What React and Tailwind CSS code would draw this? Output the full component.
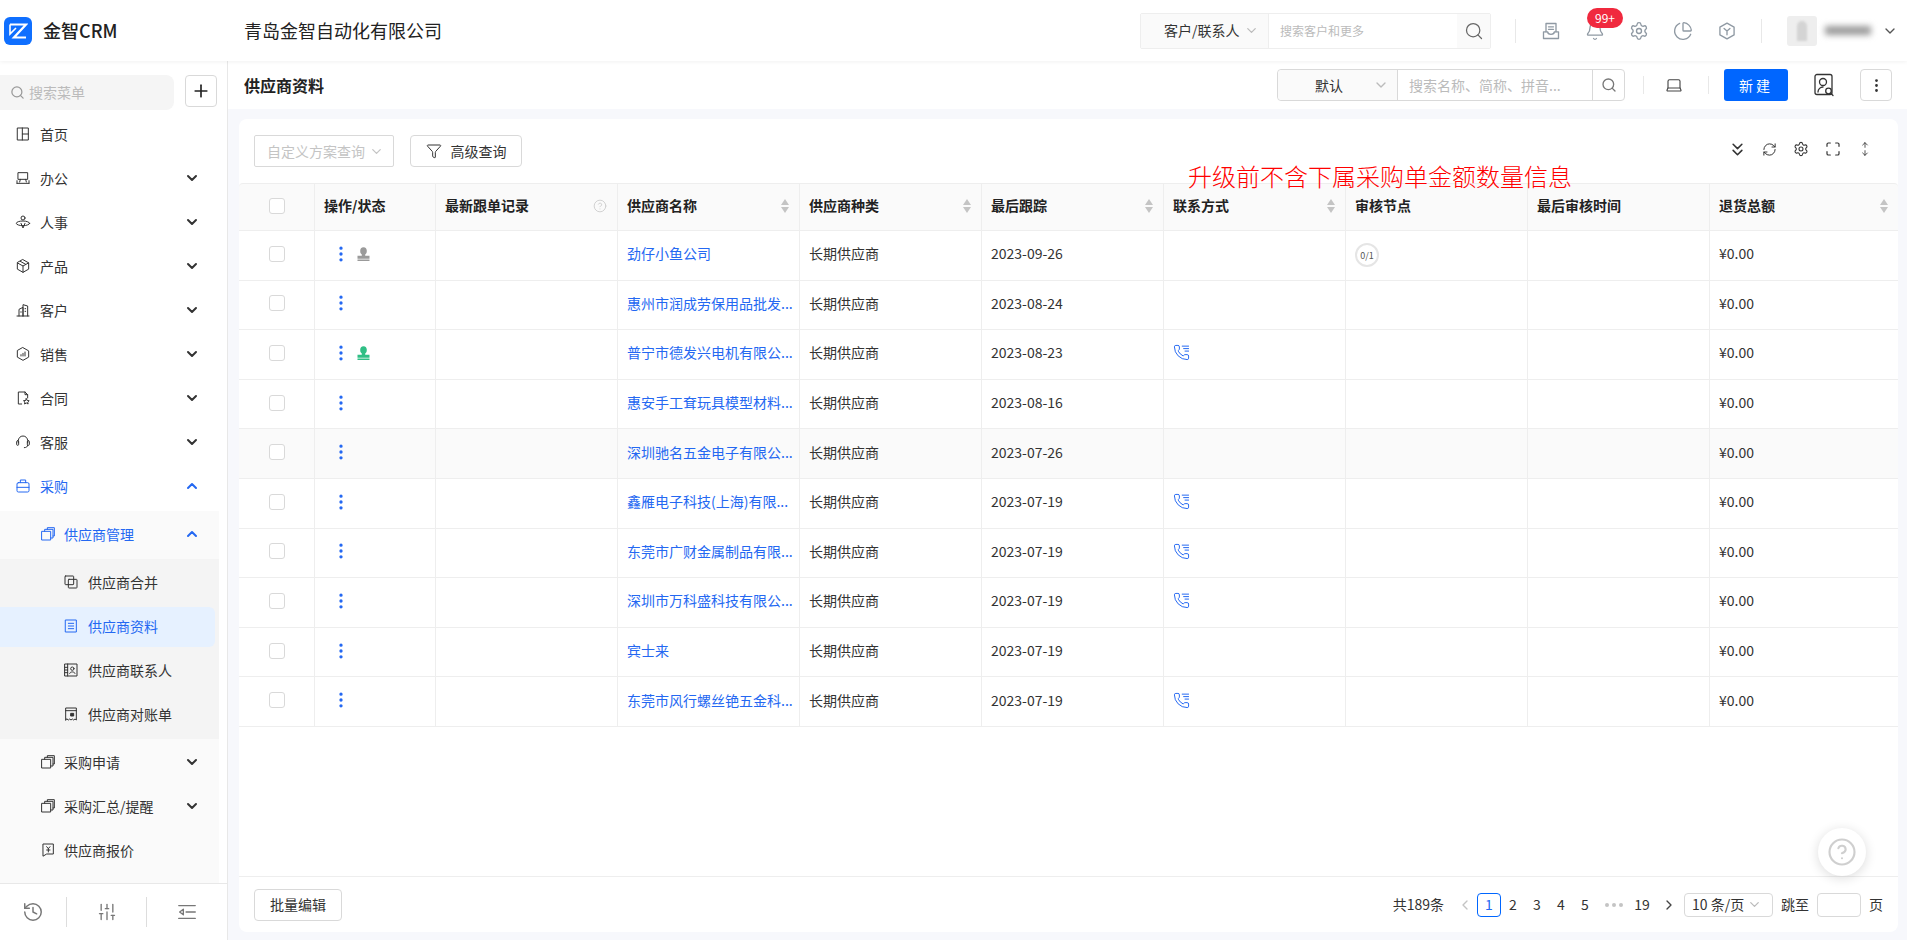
import React from 'react';
import { Search, Plus, ChevronDown, ChevronUp, Settings, Bell, History, Laptop, EllipsisVertical, CircleHelp, Filter, ChevronsDown, RefreshCw, Maximize, PieChart, ChevronLeft, ChevronRight, SlidersVertical, ArrowUp, ArrowDown } from 'lucide-react';

const I = ({ children, s = 16, className = '', w = 1.5 }) => (
  <svg width={s} height={s} viewBox="0 0 24 24" fill="none" stroke="currentColor" strokeWidth={w} strokeLinecap="round" strokeLinejoin="round" className={'shrink-0 ' + className}>{children}</svg>
);
const HomeI = () => <I><rect x="4" y="3" width="16" height="18" /><path d="M11 3v18M11 12h9" /></I>;
const OfficeI = () => <I><rect x="5" y="4" width="14" height="10" /><path d="M3 20h18M3 16v4M21 16v4M8 14l-1 4M16 14l1 4" /></I>;
const HrI = () => <I><circle cx="12" cy="6" r="3" /><ellipse cx="12" cy="14" rx="10" ry="3.5" /><path d="M9 14l3 7 3-7" /></I>;
const ClientI = () => <I><path d="M3 21h18M6 21V11l6-3v13M12 21V4l7 2v15M15 10h1M15 14h1M8.500 15h1" /></I>;
const SaleI = () => <I><path d="M12 2.500l8.500 4.800v9.400L12 21.500l-8.500-4.800V7.300z" /><path d="M9 15v-2M12 15v-4M15 15V9" /></I>;
const ContractI = () => <I><path d="M10 21H5V3h10l4 4v5M15 3v4h4" /><path d="M17 13l1.300 2.700 3 .4-2.200 2 .6 2.900-2.700-1.500-2.700 1.500.6-2.900-2.200-2 3-.4z" /></I>;
const HeadI = () => <I><path d="M5 13V10a7 7 0 0 1 14 0v3" /><rect x="2.500" y="10" width="3" height="7" rx="1.500" /><rect x="18.500" y="10" width="3" height="7" rx="1.500" /><path d="M19 17c0 2-2 3.500-5 3.500" /></I>;
const BagI = () => <I><rect x="3" y="7" width="18" height="14" rx="2" /><path d="M8 7V3h8v4M3 14h18" /></I>;
const LayerI = () => <I><rect x="3" y="8" width="13" height="13" /><path d="M7 8V5h12.500v13H16M11 5V2.500h10.500V15H19.500" /></I>;
const MergeI = () => <I><rect x="3" y="3" width="13" height="13" rx="1" /><rect x="8" y="8" width="13" height="13" rx="1" /></I>;
const DocI = () => <I><rect x="4" y="3" width="16" height="18" /><path d="M8 8h8M8 12h8M8 16h8" /></I>;
const ContactI = () => <I><rect x="3" y="3" width="18" height="18" /><path d="M7 3v18M3 8h4M3 12h4M3 16h4" /><circle cx="14" cy="10" r="2.500" /><path d="M10 17c.5-3 7.500-3 8 0" /></I>;
const BillI = () => <I><path d="M4 21V3h16v18l-2-1.500-2 1.500-2-1.500-2 1.500-2-1.500-2 1.500-2-1.500z" /><path d="M4 7h16" /><rect x="12" y="11" width="4" height="4" fill="currentColor" /></I>;
const QuoteI = () => <I><path d="M5 3h15v15H10l-5 3z" /><path d="M10 7l2.500 3L15 7M12.500 10v5M10 12h5" /></I>;
const ProductI = () => <I><path d="M12 2.500l8.500 4.800v9.400L12 21.500l-8.500-4.800V7.300z" /><path d="M3.500 7.300L12 12l8.500-4.700M12 12v9.500M8 5l8 4.500" /></I>;
const ListOutI = () => <I s={22}><path d="M3 5h18M11 12h10M3 19h18M8 9l-4 3 4 3z" /></I>;
const TrayI = () => <I s={20} w={1.600}><path d="M6 13V3h12v10" /><path d="M9 7h6M9 10h6" /><path d="M3 13h5c0 2 1.500 3 4 3s4-1 4-3h5v8H3z" /></I>;
const HexY = () => <I s={20} w={1.600}><path d="M12 2.500l8.500 4.800v9.400L12 21.500l-8.500-4.800V7.300z" /><path d="M8.500 9l3.500 3 3.500-3M12 12v4.500" /></I>;
const Person = ({ c }) => <svg width="13" height="14" viewBox="0 0 13 14" className={c}><ellipse cx="6.500" cy="4" rx="3.300" ry="3.800" fill="currentColor" /><path d="M4.800 7h3.400v1.800H12.500v3H.5v-3h4.300z" fill="currentColor" /><rect x=".5" y="12.500" width="12" height="1.500" fill="currentColor" /></svg>;
const PhoneI = () => (
  <I s={17} className="text-[#2468f2]" w={1.400}>
    <path d="M13.832 16.568a1 1 0 0 0 1.213-.303l.355-.465A2 2 0 0 1 17 15h3a2 2 0 0 1 2 2v3a2 2 0 0 1-2 2A18 18 0 0 1 2 4a2 2 0 0 1 2-2h3a2 2 0 0 1 2 2v3a2 2 0 0 1-.8 1.600l-.468.351a1 1 0 0 0-.292 1.233 14 14 0 0 0 6.392 6.384" />
    <path d="M13 3h9M15 6.500h7M17 10h5" />
  </I>
);
const Sort = () => (
  <span className="flex flex-col gap-[2px] shrink-0">
    <span className="w-0 h-0 border-x-[4px] border-x-transparent border-b-[6px] border-b-[#c4c4c4]" />
    <span className="w-0 h-0 border-x-[4px] border-x-transparent border-t-[6px] border-t-[#c4c4c4]" />
  </span>
);
const Check = () => <span className="block w-[16px] h-[16px] rounded-[3px] border border-[#d9d9d9] bg-white" />;

const top = [
  ['首页', HomeI, 0], ['办公', OfficeI, 1], ['人事', HrI, 1], ['产品', ProductI, 1], ['客户', ClientI, 1],
  ['销售', SaleI, 1], ['合同', ContractI, 1], ['客服', HeadI, 1],
];
const leaves = [['供应商合并', MergeI], ['供应商资料', DocI, true], ['供应商联系人', ContactI], ['供应商对账单', BillI]];

const columns = ['', '操作/状态', '最新跟单记录', '供应商名称', '供应商种类', '最后跟踪', '联系方式', '审核节点', '最后审核时间', '退货总额'];
const sortable = [3, 4, 5, 6, 9];
const rows = [
  ['劲仔小鱼公司', '2023-09-26', 0, 'gray', true],
  ['惠州市润成劳保用品批发...', '2023-08-24', 0],
  ['普宁市德发兴电机有限公...', '2023-08-23', 1, 'green'],
  ['惠安手工耷玩具模型材料...', '2023-08-16', 0],
  ['深圳驰名五金电子有限公...', '2023-07-26', 0, null, false, true],
  ['鑫雁电子科技(上海)有限...', '2023-07-19', 1],
  ['东莞市广财金属制品有限...', '2023-07-19', 1],
  ['深圳市万科盛科技有限公...', '2023-07-19', 1],
  ['宾士来', '2023-07-19', 0],
  ['东莞市风行螺丝铯五金科...', '2023-07-19', 1],
];
const grid = 'grid grid-cols-[76px_121px_182px_182px_182px_182px_182px_182px_182px_188px]';
const base = 'border-r border-b border-[#eeeeee] pb-[3px] flex items-center min-w-0';
const cell = base + ' px-[9px]';

function Sidebar() {
  return (
    <aside className="w-[228px] shrink-0 border-r border-[#e8e8e8] bg-white flex flex-col text-[14px] text-[#333]">
      <div className="h-[52px] shrink-0 pt-[14px] flex items-start">
        <div className="w-[174px] h-[35px] bg-[#f5f5f5] rounded-r-[8px] flex items-center pl-[10px] gap-[4px] text-[#bbbbbb]">
          <Search size={15} className="text-[#999]" /><span>搜索菜单</span>
        </div>
        <button className="ml-[11px] w-[32px] h-[32px] border border-[#d9d9d9] rounded-[4px] flex items-center justify-center text-[#222]"><Plus size={20} strokeWidth={2} /></button>
      </div>
      {top.map(([t, Ic, ch]) => (
        <div key={t} className="h-[44px] shrink-0 w-[219px] flex items-center pl-[15px] gap-[9px] pb-[2px]">
          <Ic /><span className="flex-1">{t}</span>{ch ? <ChevronDown size={16} strokeWidth={3} className="mr-[19px] text-[#333]" /> : null}
        </div>
      ))}
      <div className="h-[44px] shrink-0 w-[219px] flex items-center pl-[15px] gap-[9px] pb-[2px] text-[#2468f2]">
        <BagI /><span className="flex-1">采购</span><ChevronUp size={16} strokeWidth={3} className="mr-[19px]" />
      </div>
      <div className="h-[2px] shrink-0" />
      <div className="w-[219px] flex-1 bg-[#fafafa] pt-[2px]">
        <div className="h-[44px] flex items-center pl-[40px] gap-[8px] pb-[2px] text-[#2468f2]">
          <LayerI /><span className="flex-1">供应商管理</span><ChevronUp size={16} strokeWidth={3} className="mr-[19px]" />
        </div>
        <div className="mt-[2px] bg-[#f4f4f4] py-[2px]">
          {leaves.map(([t, Ic, act]) => (
            <div key={t} className="h-[44px] py-[2px] pr-[4px]">
              <div className={'h-[40px] flex items-center pl-[63px] gap-[9px] pb-[2px] rounded-r-[6px] ' + (act ? 'bg-[#e6f1ff] text-[#2468f2]' : '')}>
                <Ic /><span>{t}</span>
              </div>
            </div>
          ))}
        </div>
        <div className="pt-[2px]">
          {[['采购申请', LayerI, 1], ['采购汇总/提醒', LayerI, 1], ['供应商报价', QuoteI, 0]].map(([t, Ic, ch]) => (
            <div key={t} className="h-[44px] flex items-center pl-[40px] gap-[8px] pb-[2px]">
              <Ic /><span className="flex-1">{t}</span>{ch ? <ChevronDown size={16} strokeWidth={3} className="mr-[19px]" /> : null}
            </div>
          ))}
        </div>
      </div>
      <div className="h-[57px] shrink-0 border-t border-[#e8e8e8] flex items-center text-[#777]">
        <div className="w-[67px] flex justify-center h-[30px] items-center border-r border-[#dddddd]"><History size={22} strokeWidth={1.600} /></div>
        <div className="w-[80px] flex justify-center h-[30px] items-center border-r border-[#dddddd]"><SlidersVertical size={20} strokeWidth={1.600} /></div>
        <div className="w-[80px] flex justify-center h-[30px] items-center"><ListOutI /></div>
      </div>
    </aside>
  );
}

function Header() {
  return (
    <header className="relative z-10 h-[61px] shrink-0 bg-white shadow-[0_1px_4px_rgba(0,0,0,0.06)] flex items-center">
      <div className="w-[244px] flex items-center pl-[4px] gap-[11px]">
        <span className="w-[28px] h-[28px] rounded-[6px] bg-[#0f6fff] flex items-center justify-center">
          <svg width="20" height="16" viewBox="0 0 20 16" fill="none" stroke="#fff"><path d="M2 1.500h16L6 14.500h12" strokeWidth="2.200" /><path d="M2 1.500v9.500l6-6" strokeWidth="1.600" /></svg>
        </span>
        <span className="text-[18px] text-[#222] font-medium">金智CRM</span>
      </div>
      <span className="text-[18px] text-[#222]">青岛金智自动化有限公司</span>
      <div className="ml-auto flex items-center h-[36px] w-[351px] border border-[#eeeeee] rounded-[2px] text-[14px]">
        <div className="w-[128px] h-full bg-[#fafafa] border-r border-[#eeeeee] flex items-center pl-[23px] gap-[4px] text-[#333]">
          <span>客户/联系人</span><ChevronDown size={15} className="text-[#bbb]" />
        </div>
        <span className="flex-1 pl-[11px] text-[12px] text-[#bbbbbb]">搜索客户和更多</span>
        <span className="w-[33px] h-full bg-[#fafafa] flex items-center justify-center text-[#666]"><Search size={20} strokeWidth={1.500} /></span>
      </div>
      <div className="w-px h-[24px] bg-[#e8e8e8] ml-[24px]" />
      <div className="flex items-center text-[#8f99a3]">
        <span className="w-[44px] ml-[13px] flex justify-center"><TrayI /></span>
        <span className="relative w-[44px] flex justify-center"><Bell size={20} strokeWidth={1.600} />
          <span className="absolute left-[14px] top-[-13px] w-[36px] h-[20px] rounded-full bg-[#f0293e] text-white text-[12px] flex items-center justify-center">99+</span>
        </span>
        <span className="w-[44px] flex justify-center"><Settings size={20} strokeWidth={1.600} /></span>
        <span className="w-[44px] flex justify-center"><PieChart size={20} strokeWidth={1.600} /></span>
        <span className="w-[44px] flex justify-center"><HexY /></span>
      </div>
      <div className="w-px h-[24px] bg-[#e8e8e8] ml-[12px]" />
      <div className="ml-[25px] w-[30px] h-[30px] bg-[#eeeeee] rounded-[3px] flex items-center justify-center"><span className="w-[10px] h-[20px] rounded-t-full bg-[#d4d4d4] blur-[1px]" /></div>
      <div className="ml-[8px] w-[46px] h-[9px] bg-[#9a9a9a] blur-[3px]" />
      <ChevronDown size={16} className="ml-[11px] mr-[9px] text-[#555]" />
    </header>
  );
}

function TitleBar() {
  return (
    <div className="h-[48px] shrink-0 bg-white flex items-center pl-[16px] text-[14px]">
      <span className="text-[16px] font-bold text-[#222]">供应商资料</span>
      <div className="ml-auto flex items-center h-[32px] w-[348px] border border-[#d9d9d9] rounded-[4px]">
        <div className="w-[120px] h-full bg-[#fafafa] border-r border-[#d9d9d9] rounded-l-[4px] flex items-center pl-[37px] text-[#333]">
          <span>默认</span><ChevronDown size={16} className="ml-[30px] text-[#bbb]" />
        </div>
        <span className="w-[195px] pl-[11px] text-[#bbbbbb] border-r border-[#d9d9d9] h-full flex items-center">搜索名称、简称、拼音...</span>
        <span className="flex-1 flex items-center justify-center text-[#777]"><Search size={16} /></span>
      </div>
      <div className="w-px h-[18px] bg-[#e8e8e8] ml-[18px]" />
      <span className="w-[59px] flex justify-center text-[#444]"><Laptop size={18} strokeWidth={1.500} /></span>
      <div className="w-px h-[18px] bg-[#e8e8e8] ml-[5px]" />
      <button className="ml-[15px] w-[64px] h-[32px] rounded-[3px] bg-[#0066ff] text-white tracking-[3px]">新建</button>
      <span className="ml-[25px] w-[22px] flex justify-center text-[#333]">
        <I s={24} w={1.300}><rect x="3" y="1.500" width="17" height="20" rx="2" /><circle cx="11" cy="9" r="3.500" /><path d="M6 19c0-3 2.500-5 5-5" /><circle cx="16.500" cy="18" r="2.800" /><path d="M19 20.500l2 2" /></I>
      </span>
      <button className="ml-[25px] mr-[15px] w-[32px] h-[32px] border border-[#d9d9d9] rounded-[4px] flex items-center justify-center text-[#333]"><EllipsisVertical size={17} /></button>
    </div>
  );
}

function Table() {
  return (
    <div className="flex-1 min-h-0 text-[14px] text-[#333]">
      <div className={grid + ' h-[48px] bg-[#fafafa] border-t border-[#eeeeee] rounded-t-[4px]'}>
        {columns.map((c, i) => (
          <div key={i} className={cell + (i === 0 ? ' justify-center' : ' justify-between') + ' font-bold text-[#222]' + (i === 9 ? ' border-r-0' : '')}>
            {i === 0 ? <Check /> : <span>{c}</span>}
            {sortable.includes(i) ? <span className="mr-[1px]"><Sort /></span> : null}
            {i === 2 ? <CircleHelp size={14} strokeWidth={1.500} className="text-[#cccccc] mr-[1px]" /> : null}
          </div>
        ))}
      </div>
      {rows.map((r, i) => (
        <div key={i} className={grid + ' h-[49.6px] ' + (r[5] ? 'bg-[#fafafa]' : 'bg-white')}>
          <div className={cell + ' justify-center'}><Check /></div>
          <div className={base + ' pl-[16px] gap-[6px]'}>
            <EllipsisVertical size={20} strokeWidth={2} className="text-[#2468f2]" />
            {r[3] === 'gray' ? <Person c="text-[#9a9a9a]" /> : null}
            {r[3] === 'green' ? <Person c="text-[#2fbf85]" /> : null}
          </div>
          <div className={cell} />
          <div className={base + ' pl-[9px]'}><span className="whitespace-nowrap text-[#2468f2]">{r[0]}</span></div>
          <div className={cell}>长期供应商</div>
          <div className={cell}>{r[1]}</div>
          <div className={cell}>{r[2] ? <PhoneI /> : null}</div>
          <div className={cell}>
            {r[4] ? <span className="w-[24px] h-[24px] rounded-full border-2 border-[#e5e5e5] flex items-center justify-center text-[9px] text-[#555] mt-[3px]">0/1</span> : null}
          </div>
          <div className={cell} />
          <div className={cell + ' border-r-0'}>¥0.00</div>
        </div>
      ))}
    </div>
  );
}

function Pager() {
  return (
    <div className="h-[56px] shrink-0 border-t border-[#eeeeee] flex items-center pl-[15px] text-[14px] text-[#333]">
      <button className="w-[88px] h-[32px] border border-[#d9d9d9] rounded-[4px] bg-white">批量编辑</button>
      <span className="ml-auto">共189条</span>
      <ChevronLeft size={16} className="ml-[13px] text-[#c4c4c4]" />
      <span className="ml-[4px] w-[24px] h-[24px] border border-[#0066ff] rounded-[4px] flex items-center justify-center text-[#2468f2]">1</span>
      {['2', '3', '4', '5'].map((n) => <span key={n} className="w-[24px] text-center">{n}</span>)}
      <span className="w-[33px] flex items-center justify-center gap-[3px]">
        <span className="w-[4px] h-[4px] rounded-full bg-[#c4c4c4]" />
        <span className="w-[4px] h-[4px] rounded-full bg-[#c4c4c4]" />
        <span className="w-[4px] h-[4px] rounded-full bg-[#c4c4c4]" />
      </span>
      <span className="w-[24px] text-center">19</span>
      <ChevronRight size={16} className="ml-[7px] text-[#444]" />
      <div className="ml-[7px] w-[89px] h-[24px] border border-[#d9d9d9] rounded-[4px] flex items-center pl-[7px] gap-[3px]">
        <span className="whitespace-nowrap">10 条/页</span><ChevronDown size={15} className="text-[#bbb]" />
      </div>
      <span className="ml-[8px]">跳至</span>
      <span className="ml-[8px] w-[44px] h-[24px] border border-[#d9d9d9] rounded-[4px]" />
      <span className="ml-[8px] mr-[15px]">页</span>
    </div>
  );
}

export default function App() {
  return (
    <div className="relative w-[1907px] h-[940px] overflow-hidden flex flex-col bg-white font-['Noto_Sans_CJK_SC','Noto_Sans',sans-serif]">
      <Header />
      <div className="flex flex-1 min-h-0">
        <Sidebar />
        <main className="flex-1 min-w-0 flex flex-col bg-[#f7f8fc]">
          <TitleBar />
          <div className="flex-1 min-h-0 pt-[10px] pl-[11px] pr-[9px] pb-[8px]">
            <div className="relative h-full bg-white rounded-[8px] flex flex-col">
              <div className="h-[64px] shrink-0 flex items-start pt-[16px] pl-[15px] text-[14px]">
                <div className="w-[140px] h-[32px] border border-[#d9d9d9] rounded-[2px] flex items-center pl-[12px] text-[#c4c4c4] gap-[4px]">
                  <span>自定义方案查询</span><ChevronDown size={15} />
                </div>
                <button className="ml-[16px] w-[112px] h-[32px] border border-[#d9d9d9] rounded-[4px] flex items-center justify-center gap-[9px] text-[#333]">
                  <Filter size={16} strokeWidth={1.500} /><span>高级查询</span>
                </button>
                <div className="ml-auto mr-[17px] flex items-center h-[28px] text-[#333]">
                  <span className="w-[32px] flex justify-center"><ChevronsDown size={21} strokeWidth={1.800} /></span>
                  <span className="w-[32px] flex justify-center"><RefreshCw size={15} strokeWidth={1.600} /></span>
                  <span className="w-[32px] flex justify-center"><Settings size={16} strokeWidth={1.600} /></span>
                  <span className="w-[32px] flex justify-center"><Maximize size={16} strokeWidth={1.800} /></span>
                  <span className="w-[32px] flex flex-col items-center"><ArrowUp size={8} strokeWidth={2.500} /><ArrowDown size={8} strokeWidth={2.500} /></span>
                </div>
              </div>
              <Table />
              <Pager />
              <span className="absolute left-[949px] top-[41px] text-[24px] leading-[32px] font-extralight text-[#ff0000] whitespace-nowrap">升级前不含下属采购单金额数量信息</span>
              <button className="absolute left-[1579px] top-[709px] w-[48px] h-[48px] rounded-full bg-white shadow-[0_2px_12px_rgba(0,0,0,0.14)] flex items-center justify-center text-[#cfcfcf]"><CircleHelp size={30} strokeWidth={1.700} /></button>
            </div>
          </div>
        </main>
      </div>
    </div>
  );
}
